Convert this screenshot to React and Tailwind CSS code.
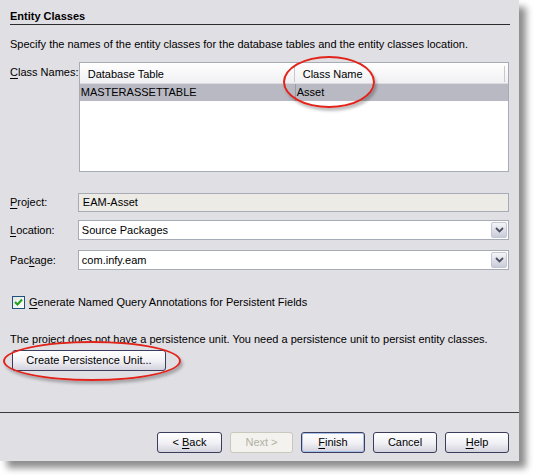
import React from "react";

function U({ children }) {
  return <span className="underline underline-offset-2">{children}</span>;
}

function Btn({ children, primary, disabled, className = "" }) {
  let tone = "border-[#3c3c5c] bg-gradient-to-b from-white via-[#f2f2f6] to-[#d4d3de] text-black";
  if (disabled) tone = "border-[#cac8bb] bg-[#f3f2ee] text-[#b2b0a4]";
  if (primary) tone += " shadow-[inset_0_0_0_1px_#a8c2ec]";
  return (
    <div className={`flex h-[21px] items-center justify-center rounded-[3px] border text-[11px] ${tone} ${className}`}>
      <span>{children}</span>
    </div>
  );
}

function Chevron() {
  return (
    <div className="flex h-full w-[16px] items-center justify-center rounded-[2px] border border-[#c3c7d3] bg-gradient-to-b from-[#f4f5f9] to-[#c9cbd8]">
      <svg width="9" height="6" viewBox="0 0 9 6">
        <path d="M1 1 L4.5 4.5 L8 1" fill="none" stroke="#4d5060" strokeWidth="1.8" />
      </svg>
    </div>
  );
}

function Combo({ value }) {
  return (
    <div className="flex h-[20px] w-[432px] items-center border border-[#a6abb6] bg-white p-[1px]">
      <span className="flex-1 pl-[2px] text-[11px] text-black">{value}</span>
      <Chevron />
    </div>
  );
}

export default function App() {
  return (
    <div className="relative h-[475px] w-[535px] bg-white font-['Liberation_Sans',Arial,sans-serif] text-[11px] text-black">
      <div className="relative h-[461px] w-[519px] bg-[#e0dfe4] shadow-[7px_7px_7px_rgba(0,0,0,0.45)]">
        <div className="flex flex-col px-[10px] pt-[10px]">
          <div className="w-[500px] border-b border-[#2c2c2c] pb-[2px] text-[11px] font-bold leading-[12px]">
            Entity Classes
          </div>

          <div className="mt-[13px] leading-[13px]">
            Specify the names of the entity classes for the database tables and the entity classes location.
          </div>

          <div className="mt-[11px] flex">
            <div className="w-[69px] pt-[4px] leading-[13px]">
              <U>C</U>lass Names:
            </div>
            <div className="h-[110px] w-[432px] border border-[#a6abb6] bg-white">
              <div className="flex h-[21px] items-center border-b border-[#dcdce0] bg-gradient-to-b from-white to-[#f0f0f3] pt-[2px]">
                <div className="w-[214px] pl-[8px]">Database Table</div>
                <div className="h-[16px] w-px bg-[#c8c8cc]" />
                <div className="flex-1 pl-[8px]">Class Name</div>
                <div className="mr-[3px] h-[16px] w-px bg-[#c8c8cc]" />
              </div>
              <div className="flex h-[17px] items-center bg-[#b9b9c3]">
                <div className="w-[215px] pl-[1px]">MASTERASSETTABLE</div>
                <div className="h-full w-px bg-[#9a9aa6]" />
                <div className="flex-1 pl-[1px]">Asset</div>
              </div>
            </div>
          </div>

          <div className="mt-[21px] flex items-center">
            <div className="w-[68px]">
              <U>P</U>roject:
            </div>
            <div className="flex h-[19px] w-[432px] items-center border border-[#a6abb6] bg-[#ecebe5] pl-[4px]">
              EAM-Asset
            </div>
          </div>

          <div className="mt-[8px] flex items-center">
            <div className="w-[68px]">
              <U>L</U>ocation:
            </div>
            <Combo value="Source Packages" />
          </div>

          <div className="mt-[10px] flex items-center">
            <div className="w-[68px]">
              Pac<U>k</U>age:
            </div>
            <Combo value="com.infy.eam" />
          </div>

          <div className="mt-[24px] flex items-center pl-[2px]">
            <div className="flex h-[13px] w-[13px] items-center justify-center border border-[#1c5180] bg-gradient-to-br from-[#e4e4e0] to-white">
              <svg width="9" height="8" viewBox="0 0 9 8">
                <path d="M1 4 L3.5 6.5 L8 1.5" fill="none" stroke="#21a121" strokeWidth="2" />
              </svg>
            </div>
            <span className="ml-[4px]">
              <U>G</U>enerate Named Query Annotations for Persistent Fields
            </span>
          </div>

          <div className="mt-[22px] leading-[13px]">
            The project does not have a persistence unit. You need a persistence unit to persist entity classes.
          </div>

          <Btn className="ml-[2px] mt-[4px] h-[20px] w-[154px]">Create Persistence Unit...</Btn>
        </div>

        <div className="mt-[41px] h-px w-[519px] bg-[#3a3a3e]" />

        <div className="mt-[19px] flex justify-end gap-[8px] pr-[10px]">
          <Btn className="w-[65px]">
            {"< "}
            <U>B</U>ack
          </Btn>
          <Btn disabled className="w-[63px]">
            Next &gt;
          </Btn>
          <Btn primary className="w-[64px]">
            <U>F</U>inish
          </Btn>
          <Btn className="w-[64px]">Cancel</Btn>
          <Btn className="w-[64px]">
            <U>H</U>elp
          </Btn>
        </div>
      </div>

      <div className="absolute left-[283px] top-[56px] h-[52px] w-[92px] rounded-[50%] border-2 border-[#e2231a] shadow-[2px_3px_3px_rgba(0,0,0,0.25)]" />
      <div className="absolute left-[3px] top-[341px] h-[40px] w-[178px] rounded-[50%] border-2 border-[#e2231a] shadow-[2px_3px_3px_rgba(0,0,0,0.25)]" />
    </div>
  );
}
